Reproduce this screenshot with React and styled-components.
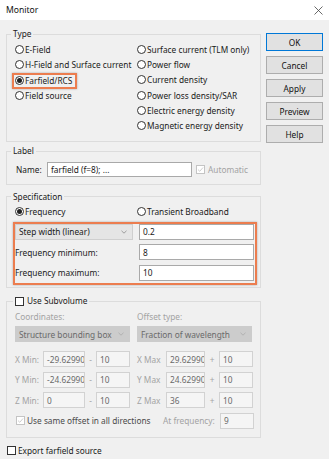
import React from 'react';
import styled, { createGlobalStyle } from 'styled-components';

const GlobalStyle = createGlobalStyle`
  html, body {
    margin: 0;
    padding: 0;
    background: #f0f0f0;
  }
  body {
    font-family: "Noto Sans", "Open Sans", sans-serif;
    font-size: 8.3px;
    color: #1a1a1a;
  }
`;

const Window = styled.div`
  width: 329px;
  height: 459px;
  background: #f0f0f0;
  overflow: hidden;
`;

const TitleBar = styled.div`
  height: 20px;
  background: #fff;
  display: flex;
  align-items: center;
  justify-content: space-between;
  padding: 0 6px 0 6px;
  font-size: 8.6px;
  color: #111;
`;

const Body = styled.div`
  display: flex;
  align-items: flex-start;
  gap: 5px;
  padding: 8px 0 0 6px;
`;

const MainCol = styled.div`
  width: 255px;
  display: flex;
  flex-direction: column;
`;

const ButtonCol = styled.div`
  display: flex;
  flex-direction: column;
  gap: 5px;
  margin-top: 5px;
`;

const Button = styled.div`
  box-sizing: border-box;
  width: 57px;
  height: 18px;
  display: flex;
  align-items: center;
  justify-content: center;
  background: #e1e1e1;
  border: 1px solid ${p => (p.$default ? '#0078d7' : '#adadad')};
  color: #111;
`;

const Group = styled.fieldset`
  box-sizing: border-box;
  width: 255px;
  margin: ${p => p.$mt || 0}px 0 0;
  padding: ${p => p.$pad};
  border: 1px solid #dcdcdc;
  min-inline-size: 0;
`;

const Legend = styled.legend`
  padding: 0 2px;
  margin-left: ${p => p.$ml ?? -4}px;
  height: 12px;
  line-height: 12px;
  display: flex;
  align-items: center;
  gap: 2px;
  color: #1a1a1a;
`;

const TypeGrid = styled.div`
  display: grid;
  grid-template-columns: 122px 1fr;
`;

const Column = styled.div`
  display: flex;
  flex-direction: column;
`;

const OptionRow = styled.div`
  height: ${p => p.$h || 15.3}px;
  display: flex;
  align-items: center;
  white-space: nowrap;
`;

const Option = styled.span`
  display: inline-flex;
  align-items: center;
  gap: 1px;
  white-space: nowrap;
`;

const Highlight = styled.span`
  box-sizing: border-box;
  display: inline-flex;
  align-items: center;
  height: 16px;
  margin: 2px 0 0 -3px;
  padding: 0 3px 0 1px;
  border: 2px solid #ec7d4f;
  box-shadow: 0 0 2px rgba(0, 0, 0, 0.3);
`;

const RadioDot = styled.span`
  box-sizing: border-box;
  width: 9px;
  height: 9px;
  border-radius: 50%;
  border: 1px solid #333;
  background: #fff;
  display: inline-flex;
  align-items: center;
  justify-content: center;
  flex: none;
  &::after {
    content: '';
    width: 5px;
    height: 5px;
    border-radius: 50%;
    background: ${p => (p.$on ? '#222' : 'transparent')};
  }
`;

const Box = styled.span`
  box-sizing: border-box;
  width: 9px;
  height: 9px;
  border: 1px solid ${p => (p.$disabled ? '#c4c4c4' : '#333')};
  background: #fff;
  display: inline-flex;
  align-items: center;
  justify-content: center;
  flex: none;
`;

const Row = styled.div`
  display: flex;
  align-items: center;
  height: ${p => p.$h || 16}px;
  margin-top: ${p => p.$mt || 0}px;
  margin-left: ${p => p.$ml || 0}px;
  white-space: nowrap;
`;

const Label = styled.span`
  width: ${p => (p.$w ? `${p.$w}px` : 'auto')};
  flex: none;
  color: ${p => p.$color || (p.$disabled ? '#a3a3a3' : '#1a1a1a')};
  margin-left: ${p => p.$ml || 0}px;
`;

const Field = styled.div`
  box-sizing: border-box;
  width: ${p => p.$w}px;
  height: ${p => p.$h || 16}px;
  flex: none;
  border: 1px solid ${p => (p.$disabled ? '#d2d2d2' : '#a9a9a9')};
  background: ${p => (p.$disabled ? '#f5f5f5' : '#fff')};
  color: ${p => (p.$disabled ? '#6a6a6a' : '#1a1a1a')};
  padding-left: 3px;
  display: flex;
  align-items: center;
  white-space: nowrap;
  overflow: hidden;
`;

const Select = styled.div`
  box-sizing: border-box;
  width: ${p => p.$w}px;
  height: 16px;
  flex: none;
  border: 1px solid ${p => (p.$disabled ? '#cccccc' : '#cfcfcf')};
  background: ${p => (p.$disabled ? '#cccccc' : '#e5e5e5')};
  color: ${p => (p.$disabled ? '#6a6a6a' : '#1a1a1a')};
  display: flex;
  align-items: center;
  justify-content: space-between;
  padding: 0 5px 0 3px;
  white-space: nowrap;
  overflow: hidden;
`;

const SpecBox = styled.div`
  box-sizing: border-box;
  width: 244px;
  margin: 3px 0 0 -2px;
  padding: 0 3px 2px 0;
  border: 2px solid #ec7d4f;
  box-shadow: 0 0 2px rgba(0, 0, 0, 0.3);
  display: grid;
  grid-template-columns: 120px 115px;
  column-gap: 4px;
  row-gap: 4.5px;
  align-items: center;
`;

const SpecLabel = styled.span`
  white-space: nowrap;
  color: #1a1a1a;
`;

const CoordGrid = styled.div`
  display: grid;
  grid-template-columns: 28px 42px 11px 34px 7px 29px 39px 14px 34px;
  grid-auto-rows: 16px;
  row-gap: 4.3px;
  align-items: center;
  margin-top: 9px;
  color: #a3a3a3;
  white-space: nowrap;
`;

const Sep = styled.span`
  text-align: center;
  color: #a3a3a3;
`;

const Chevron = ({ color = '#8a8a8a' }) => (
  <svg width="6" height="4" viewBox="0 0 6 4">
    <path d="M0.5 0.8 L3 3.2 L5.5 0.8" fill="none" stroke={color} strokeWidth="0.8" />
  </svg>
);

const Tick = ({ color }) => (
  <svg width="7" height="7" viewBox="0 0 7 7">
    <path d="M1 3.6 L2.8 5.3 L6 1.5" fill="none" stroke={color} strokeWidth="0.9" />
  </svg>
);

const Radio = ({ on, children }) => (
  <Option>
    <RadioDot $on={on} />
    {children}
  </Option>
);

export default function App() {
  return (
    <Window>
      <GlobalStyle />
      <TitleBar>
        <span>Monitor</span>
        <svg width="9" height="9" viewBox="0 0 9 9">
          <path d="M0.5 0.5 L8.5 8.5 M8.5 0.5 L0.5 8.5" stroke="#444" strokeWidth="0.8" />
        </svg>
      </TitleBar>
      <Body>
        <MainCol>
          <Group $pad="1.5px 4px 7.7px 8px">
            <Legend>Type</Legend>
            <TypeGrid>
              <Column>
                <OptionRow><Radio>E-Field</Radio></OptionRow>
                <OptionRow><Radio>H-Field and Surface current</Radio></OptionRow>
                <OptionRow>
                  <Highlight><Radio on>Farfield/RCS</Radio></Highlight>
                </OptionRow>
                <OptionRow><Radio>Field source</Radio></OptionRow>
              </Column>
              <Column>
                <OptionRow><Radio>Surface current (TLM only)</Radio></OptionRow>
                <OptionRow><Radio>Power flow</Radio></OptionRow>
                <OptionRow><Radio>Current density</Radio></OptionRow>
                <OptionRow><Radio>Power loss density/SAR</Radio></OptionRow>
                <OptionRow><Radio>Electric energy density</Radio></OptionRow>
                <OptionRow><Radio>Magnetic energy density</Radio></OptionRow>
              </Column>
            </TypeGrid>
          </Group>

          <Group $mt={3.5} $pad="5px 4px 7px 8px">
            <Legend>Label</Legend>
            <Row $h={15}>
              <Label $w={31} $ml={1}>Name:</Label>
              <Field $w={145} $h={15}>farfield (f=8); ...</Field>
              <Box $disabled style={{ marginLeft: 4 }}>
                <Tick color="#c8c8c8" />
              </Box>
              <Label $disabled $ml={3}>Automatic</Label>
            </Row>
          </Group>

          <Group $mt={5.5} $pad="2px 4px 2px 8px">
            <Legend>Specification</Legend>
            <TypeGrid>
              <OptionRow $h={14}><Radio on>Frequency</Radio></OptionRow>
              <OptionRow $h={14}><Radio>Transient Broadband</Radio></OptionRow>
            </TypeGrid>
            <SpecBox>
              <Select $w={118}>
                <span>Step width (linear)</span>
                <Chevron />
              </Select>
              <Field $w={115}>0.2</Field>
              <SpecLabel>Frequency minimum:</SpecLabel>
              <Field $w={115}>8</Field>
              <SpecLabel>Frequency maximum:</SpecLabel>
              <Field $w={115}>10</Field>
            </SpecBox>
          </Group>

          <Group $mt={7.5} $pad="3px 4px 8px 8px">
            <Legend $ml={-2}>
              <Box>{null}</Box>
              <span style={{ marginLeft: 1 }}>Use Subvolume</span>
            </Legend>
            <Row $h={12}>
              <Label $w={122} $disabled>Coordinates:</Label>
              <Label $disabled>Offset type:</Label>
            </Row>
            <Row $mt={4}>
              <Select $w={115} $disabled>
                <span>Structure bounding box</span>
                <Chevron color="#aaaaaa" />
              </Select>
              <Select $w={115} $disabled style={{ marginLeft: 7 }}>
                <span>Fraction of wavelength</span>
                <Chevron color="#aaaaaa" />
              </Select>
            </Row>
            <CoordGrid>
              <span>X Min:</span>
              <Field $w={42} $disabled>-29.62990</Field>
              <Sep>-</Sep>
              <Field $w={34} $disabled>10</Field>
              <span />
              <span>X Max</span>
              <Field $w={39} $disabled>29.62990</Field>
              <Sep>+</Sep>
              <Field $w={34} $disabled>10</Field>

              <span>Y Min:</span>
              <Field $w={42} $disabled>-24.62990</Field>
              <Sep>-</Sep>
              <Field $w={34} $disabled>10</Field>
              <span />
              <span>Y Max</span>
              <Field $w={39} $disabled>24.62990</Field>
              <Sep>+</Sep>
              <Field $w={34} $disabled>10</Field>

              <span>Z Min:</span>
              <Field $w={42} $disabled>0</Field>
              <Sep>-</Sep>
              <Field $w={34} $disabled>10</Field>
              <span />
              <span>Z Max</span>
              <Field $w={39} $disabled>36</Field>
              <Sep>+</Sep>
              <Field $w={34} $disabled>10</Field>
            </CoordGrid>
            <Row $mt={4.5}>
              <Box $disabled style={{ marginLeft: 1 }}>
                <Tick color="#c8c8c8" />
              </Box>
              <Label $w={136} $ml={2} $color="#4a4a4a">Use same offset in all directions</Label>
              <Label $w={57} $disabled>At frequency:</Label>
              <Field $w={34} $disabled>9</Field>
            </Row>
          </Group>

          <Row $h={13} $mt={6} $ml={1}>
            <Box />
            <Label $ml={2}>Export farfield source</Label>
          </Row>
        </MainCol>

        <ButtonCol>
          <Button $default>OK</Button>
          <Button>Cancel</Button>
          <Button>Apply</Button>
          <Button>Preview</Button>
          <Button>Help</Button>
        </ButtonCol>
      </Body>
    </Window>
  );
}
